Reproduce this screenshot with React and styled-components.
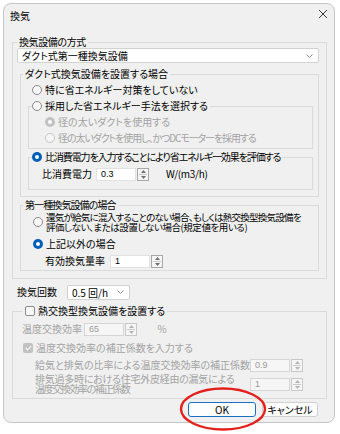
import React from "react";
import styled, { createGlobalStyle, css } from "styled-components";

const Global = createGlobalStyle`
  html, body { margin: 0; padding: 0; background: #fff; }
  body {
    font-family: "Noto Sans CJK JP", "Noto Sans", sans-serif;
    font-size: 10px;
    color: #000;
    font-feature-settings: "palt";
  }
  * { box-sizing: border-box; }
`;

const Stage = styled.div`
  position: relative;
  width: 340px;
  height: 434px;
  padding: 3px 0 0 3px;
`;

const Window = styled.div`
  width: 332px;
  height: 420px;
  border: 1px solid #c6c6c6;
  border-radius: 8px;
  background: #f0f0f0;
  display: flex;
  flex-direction: column;
  overflow: hidden;
`;

const TitleBar = styled.div`
  height: 24px;
  flex: none;
  display: flex;
  align-items: center;
  justify-content: space-between;
  padding: 0 5px 0 6px;
`;

const Title = styled.span`
  font-size: 10px;
  line-height: 12px;
`;

const Close = styled.span`
  width: 12px;
  height: 12px;
  margin-bottom: 4px;
  display: flex;
  align-items: center;
  justify-content: center;
`;

const Body = styled.div`
  display: flex;
  flex-direction: column;
  padding: 8px 7px 0 8px;
`;

const Group = styled.fieldset`
  margin: ${(p) => p.$m || "0"};
  padding: ${(p) => p.$p || "0"};
  border: 1px solid #dadada;
  min-width: 0;
  display: flex;
  flex-direction: column;
`;

const Legend = styled.legend`
  padding: ${(p) => p.$p || "0 2px"};
  line-height: ${(p) => p.$lh || 12}px;
  font-size: 10px;
  letter-spacing: ${(p) => p.$ls || 0}px;
  white-space: nowrap;
  display: flex;
  align-items: center;
  gap: 3px;
`;

const Row = styled.div`
  display: flex;
  align-items: center;
  height: ${(p) => (p.$h ? `${p.$h}px` : "auto")};
  margin: ${(p) => p.$m || "0"};
  gap: ${(p) => p.$gap ?? 3}px;
`;

const Text = styled.span`
  white-space: nowrap;
  color: ${(p) => (p.$disabled ? "#a3a3a3" : "#000")};
  line-height: ${(p) => p.$lh || 16}px;
  width: ${(p) => (p.$w ? `${p.$w}px` : "auto")};
  margin-left: ${(p) => p.$ml || 0}px;
  letter-spacing: ${(p) => p.$ls || 0}px;
  flex: none;
`;

const Line = styled.span`
  display: block;
  font-size: ${(p) => p.$fs || 10}px;
  letter-spacing: ${(p) => p.$ls || 0}px;
`;

const Dot = styled.span`
  flex: none;
  width: 10px;
  height: 10px;
  border-radius: 50%;
  ${(p) =>
    p.$checked
      ? css`
          background: ${p.$disabled ? "#c2c2c2" : "#005fb8"};
          display: flex;
          align-items: center;
          justify-content: center;
          &::after {
            content: "";
            width: 4px;
            height: 4px;
            border-radius: 50%;
            background: #fff;
          }
        `
      : css`
          background: #f7f7f7;
          border: 1px solid ${p.$disabled ? "#c6c6c6" : "#8a8a8a"};
        `}
`;

const Box = styled.span`
  flex: none;
  width: 10px;
  height: 10px;
  border-radius: 2px;
  display: flex;
  align-items: center;
  justify-content: center;
  ${(p) =>
    p.$checked
      ? css`
          background: #c2c2c2;
        `
      : css`
          background: #f7f7f7;
          border: 1px solid #8a8a8a;
        `}
`;

const NumBox = styled.div`
  width: ${(p) => p.$w}px;
  height: 13px;
  flex: none;
  display: flex;
  align-items: center;
  padding-left: 4px;
  font-family: "Liberation Sans", sans-serif;
  font-size: 9px;
  background: ${(p) => (p.$disabled ? "#f6f6f6" : "#fff")};
  border: 1px solid ${(p) => (p.$disabled ? "#d6d6d6" : "#e2e2e2")};
  color: ${(p) => (p.$disabled ? "#9a9a9a" : "#000")};
`;

const Spin = styled.div`
  width: 12px;
  height: 13px;
  flex: none;
  margin-left: 1px;
  border: 1px solid ${(p) => (p.$disabled ? "#c8c8c8" : "#a8a8a8")};
  background: #f5f5f5;
  display: flex;
  flex-direction: column;
  align-items: center;
  justify-content: space-evenly;
`;

const SpinLine = styled.span`
  width: 8px;
  height: 1px;
  background: #c9c9c9;
`;

const ComboBox = styled.div`
  width: ${(p) => (p.$w ? `${p.$w}px` : "auto")};
  height: 15px;
  flex: none;
  display: flex;
  align-items: center;
  justify-content: space-between;
  padding: 0 5px 0 4px;
  background: #fff;
  border: 1px solid #d2d2d2;
  border-radius: 2px;
  line-height: 13px;
`;

const Buttons = styled.div`
  display: flex;
  justify-content: flex-end;
  gap: 6px;
  margin: 3px 9px 0 0;
`;

const Button = styled.button`
  width: ${(p) => p.$w}px;
  height: 15px;
  padding: 0;
  font: inherit;
  font-size: 10px;
  line-height: 13px;
  color: #000;
  background: #fdfdfd;
  border: 1px solid ${(p) => (p.$primary ? "#1a6fc4" : "#d0d0d0")};
  border-radius: 3px;
`;

const Annotation = styled.svg`
  position: absolute;
  left: 0;
  top: 0;
  pointer-events: none;
`;

const Chevron = () => (
  <svg width="7" height="4" viewBox="0 0 7 4">
    <path d="M0.5 0.5 L3.5 3.5 L6.5 0.5" fill="none" stroke="#777" strokeWidth="0.9" />
  </svg>
);

const Spinner = ({ disabled }) => {
  const c = disabled ? "#b5b5b5" : "#707070";
  return (
    <Spin $disabled={disabled}>
      <svg width="5" height="3" viewBox="0 0 5 3">
        <path d="M0 3 L2.5 0 L5 3 Z" fill={c} />
      </svg>
      <SpinLine />
      <svg width="5" height="3" viewBox="0 0 5 3">
        <path d="M0 0 L2.5 3 L5 0 Z" fill={c} />
      </svg>
    </Spin>
  );
};

const Num = ({ value, w, disabled }) => (
  <Row $gap={0}>
    <NumBox $w={w} $disabled={disabled}>{value}</NumBox>
    <Spinner disabled={disabled} />
  </Row>
);

const Radio = ({ checked, disabled, children, m, lh, h, ls }) => (
  <Row $m={m} $h={h}>
    <Dot $checked={checked} $disabled={disabled} />
    <Text $disabled={disabled} $lh={lh} $ls={ls}>{children}</Text>
  </Row>
);

const Check = () => (
  <svg width="7" height="6" viewBox="0 0 7 6">
    <path d="M0.8 3 L2.7 4.8 L6.2 1" fill="none" stroke="#fff" strokeWidth="1.1" />
  </svg>
);

export default function App() {
  return (
    <>
      <Global />
      <Stage>
        <Window>
          <TitleBar>
            <Title>換気</Title>
            <Close>
              <svg width="10" height="10" viewBox="0 0 10 10">
                <path d="M1 1 L9 9 M9 1 L1 9" stroke="#222" strokeWidth="0.9" />
              </svg>
            </Close>
          </TitleBar>
          <Body>
            <Group $p="0 7px 7px 4px">
              <Legend $ls={-0.4}>換気設備の方式</Legend>
              <ComboBox>
                <span>ダクト式第一種換気設備</span>
                <Chevron />
              </ComboBox>

              <Group $m="5px 0 0 3px" $p="0 5px 6px 2px">
                <Legend>ダクト式換気設備を設置する場合</Legend>
                <Radio m="2px 0 0 9px" h={16}>特に省エネルギー対策をしていない</Radio>

                <Group $m="0 0 0 5px" $p="0 0 2px 3px">
                  <Legend $p="0 2px 0 0" $lh={16}>
                    <Dot />
                    <Text>採用した省エネルギー手法を選択する</Text>
                  </Legend>
                  <Radio checked disabled m="0 0 0 13px" h={16}>径の太いダクトを使用する</Radio>
                  <Radio disabled m="0 0 0 13px" h={16} ls={-1.1}>
                    径の太いダクトを使用し、かつDCモーターを採用する
                  </Radio>
                </Group>

                <Group $m="0 0 0 5px" $p="0 0 6px 3px">
                  <Legend $p="0 2px 0 0" $lh={16}>
                    <Dot $checked />
                    <Text $ls={-1.1}>比消費電力を入力することにより省エネルギー効果を評価する</Text>
                  </Legend>
                  <Row $h={18} $gap={0} $m="0 0 0 10px">
                    <Text $w={54}>比消費電力</Text>
                    <Num value="0.3" w={40} />
                    <Text $ml={17} $ls={-0.3}>W/(m3/h)</Text>
                  </Row>
                </Group>
              </Group>

              <Group $m="2px 0 0 3px" $p="0 0 2px 2px">
                <Legend $ls={-0.9}>第一種換気設備の場合</Legend>
                <Radio m="1px 0 0 10px" lh={10}>
                  <Line $fs={9.5} $ls={-0.75}>還気が給気に混入することのない場合、もしくは熱交換型換気設備を</Line>
                  <Line $fs={9.5} $ls={-0.45}>評価しない、または設置しない場合(規定値を用いる)</Line>
                </Radio>
                <Radio checked m="4px 0 0 10px" h={16}>上記以外の場合</Radio>
                <Row $h={14} $gap={0} $m="2px 0 0 22px">
                  <Text $w={65}>有効換気量率</Text>
                  <Num value="1" w={40} />
                </Row>
              </Group>
            </Group>

            <Row $h={16} $gap={0} $m="5px 0 0 5px">
              <Text $w={50}>換気回数</Text>
              <ComboBox $w={63}>
                <span>0.5 回/h</span>
                <Chevron />
              </ComboBox>
            </Row>

            <Group $m="3px 0 0 0" $p="0 0 4px 9px">
              <Legend $p="0 2px 0 3px" $lh={14}>
                <Box />
                <Text>熱交換型換気設備を設置する</Text>
              </Legend>
              <Row $h={14} $gap={0} $m="3px 0 0 0">
                <Text $w={62} $disabled>温度交換効率</Text>
                <Num value="65" w={40} disabled />
                <Text $disabled $ml={20}>％</Text>
              </Row>
              <Row $h={16} $m="4px 0 0 1px">
                <Box $checked>
                  <Check />
                </Box>
                <Text $disabled>温度交換効率の補正係数を入力する</Text>
              </Row>
              <Row $h={14} $gap={0} $m="2px 0 0 13px">
                <Text $w={215} $disabled>給気と排気の比率による温度交換効率の補正係数</Text>
                <Num value="0.9" w={40} disabled />
              </Row>
              <Row $gap={0} $m="2px 0 0 13px">
                <Text $w={215} $disabled $lh={10}>
                  <Line $ls={-0.25}>排気過多時における住宅外皮経由の漏気による</Line>
                  <Line $ls={-1.4}>温度交換効率の補正係数</Line>
                </Text>
                <Num value="1" w={40} disabled />
              </Row>
            </Group>

            <Buttons>
              <Button $w={68} $primary>OK</Button>
              <Button $w={56}>キャンセル</Button>
            </Buttons>
          </Body>
        </Window>
        <Annotation width="340" height="434" viewBox="0 0 340 434">
          <ellipse cx="223" cy="409" rx="42" ry="20.5" fill="none" stroke="#e3201b" strokeWidth="2.4" />
        </Annotation>
      </Stage>
    </>
  );
}
